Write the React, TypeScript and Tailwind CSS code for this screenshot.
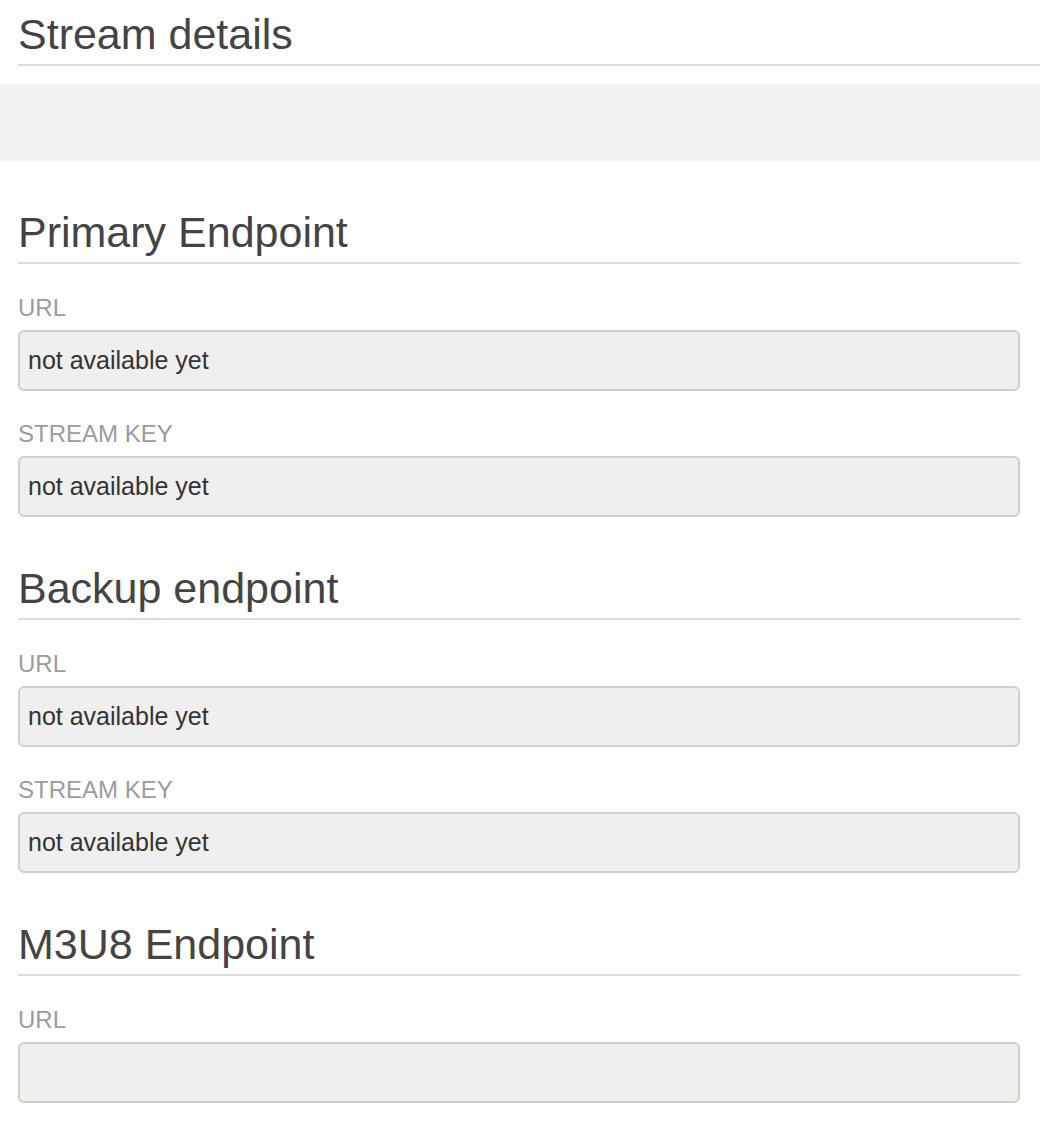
/**
 * Stream details panel — endpoints are read-only fields until the stream is provisioned.
 */

const font = "font-['Liberation_Sans','Helvetica_Neue',Arial,sans-serif]";

interface Field {
  label: string;
  value: string;
}

interface Endpoint {
  title: string;
  fields: Field[];
}

const endpoints: Endpoint[] = [
  {
    title: "Primary Endpoint",
    fields: [
      { label: "URL", value: "not available yet" },
      { label: "STREAM KEY", value: "not available yet" },
    ],
  },
  {
    title: "Backup endpoint",
    fields: [
      { label: "URL", value: "not available yet" },
      { label: "STREAM KEY", value: "not available yet" },
    ],
  },
  {
    title: "M3U8 Endpoint",
    fields: [{ label: "URL", value: "" }],
  },
];

export default function App() {
  return (
    <div className={`${font} min-h-[1132px] w-[1040px] bg-white`}>
      {/* Header */}
      <div className="pl-[18px] pt-[11px]">
        <h1 className="border-b-2 border-[#dcdcdc] pb-[7px] text-[43px] font-normal leading-[46px] text-[#444]">
          Stream details
        </h1>
      </div>

      {/* Empty status band */}
      <div className="mt-[18px] h-[77px] bg-[#f1f1f1]" />

      {/* Endpoint sections */}
      <div className="pl-[18px] pr-[20px]">
        {endpoints.map((ep) => (
          <EndpointSection key={ep.title} endpoint={ep} />
        ))}
      </div>
    </div>
  );
}

function EndpointSection({ endpoint }: { endpoint: Endpoint }) {
  return (
    <section className="mt-[48px]">
      <h2 className="border-b-2 border-[#dcdcdc] pb-[7px] text-[43px] font-normal leading-[46px] text-[#444]">
        {endpoint.title}
      </h2>
      <div className="flex flex-col">
        {endpoint.fields.map((f, i) => (
          <ReadOnlyField key={f.label} field={f} first={i === 0} />
        ))}
      </div>
    </section>
  );
}

function ReadOnlyField({ field, first }: { field: Field; first: boolean }) {
  return (
    <div className={first ? "mt-[30px]" : "mt-[29px]"}>
      <div className="text-[24px] leading-[28px] text-[#9c9c9c]">{field.label}</div>
      <div className="mt-[8px] flex h-[61px] items-center rounded-[6px] border-2 border-[#d0d0c6] bg-[#efefef] px-[8px] text-[25px] text-[#333]">
        {field.value}
      </div>
    </div>
  );
}
